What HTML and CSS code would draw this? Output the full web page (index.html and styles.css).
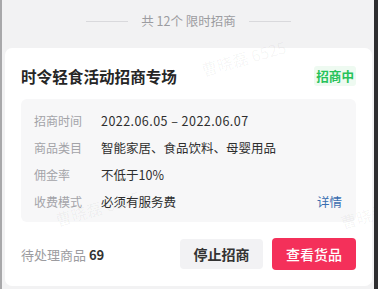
FILE: index.html
```html
<!DOCTYPE html>
<html lang="zh-CN">
<head>
<meta charset="utf-8">
<link rel="stylesheet" href="styles.css">
</head>
<body>
<div class="frame">
  <div class="header">
    <span class="line"></span>
    <span class="header-text">共 12个 限时招商</span>
    <span class="line"></span>
  </div>
  <div class="card">
    <div class="title-row">
      <span class="title">时令轻食活动招商专场</span>
      <span class="badge">招商中</span>
    </div>
    <div class="info">
      <div class="row"><span class="label">招商时间</span><span class="value date">2022.06.05 – 2022.06.07</span></div>
      <div class="row"><span class="label">商品类目</span><span class="value">智能家居、食品饮料、母婴用品</span></div>
      <div class="row"><span class="label">佣金率</span><span class="value">不低于10%</span></div>
      <div class="row"><span class="label">收费模式</span><span class="value">必须有服务费</span><span class="link">详情</span></div>
    </div>
    <div class="footer">
      <span class="pending">待处理商品 <b class="count">69</b></span>
      <div class="actions">
        <button class="btn btn-gray">停止招商</button>
        <button class="btn btn-red">查看货品</button>
      </div>
    </div>
  </div>
  <span class="wm wm1">曹晓磊 6525</span>
  <span class="wm wm2">曹晓磊 6525</span>
  <span class="wm wm3">曹晓磊</span>
</div>
</body>
</html>
```
FILE: styles.css
```css
* { box-sizing: border-box; }
html, body { margin: 0; padding: 0; }
body {
  width: 378px;
  height: 289px;
  overflow: hidden;
  background: #f2f2f3;
  font-family: "Noto Sans CJK SC", "Noto Sans", sans-serif;
  color: #333;
}
.frame {
  position: relative;
  width: 378px;
  height: 289px;
  border-left: 2px solid #a8a8aa;
  border-right: 4px solid #2e2e30;
  padding: 0 2px 0 3px;
  display: flex;
  flex-direction: column;
  overflow: hidden;
}
.header {
  display: flex;
  align-items: center;
  justify-content: center;
  height: 16px;
  margin-top: 13px;
  margin-bottom: 19px;
  gap: 12px;
}
.line {
  width: 42px;
  height: 1px;
  background: #d9d9dc;
}
.header-text {
  font-size: 12.5px;
  line-height: 16px;
  color: #9c9ca0;
  margin: 0 1px;
}
.card {
  background: #fff;
  border-radius: 7px;
  padding: 17px 16px 16px 16px;
}
.title-row {
  display: flex;
  align-items: center;
  justify-content: space-between;
  height: 22px;
}
.title {
  font-size: 15.6px;
  font-weight: 700;
  color: #262626;
  line-height: 22px;
}
.badge {
  font-size: 12.6px;
  font-weight: 700;
  color: #27c25a;
  background: #eefaf1;
  border-radius: 3px;
  padding: 0 2px;
  line-height: 20px;
  height: 20px;
}
.info {
  margin-top: 12px;
  background: #f7f7f8;
  border-radius: 6px;
  padding: 8px 14px 7px 13px;
  display: flex;
  flex-direction: column;
}
.row {
  display: flex;
  align-items: center;
  height: 27px;
}
.label {
  width: 67px;
  font-size: 12px;
  color: #a3a3a8;
}
.value {
  flex: 1;
  font-size: 12.5px;
  color: #2e2e2e;
}
.date {
  letter-spacing: 0.45px;
}
.link {
  font-size: 12.5px;
  color: #3a6eb0;
}
.footer {
  margin-top: 16px;
  height: 32px;
  display: flex;
  align-items: center;
  justify-content: space-between;
}
.pending {
  font-size: 13px;
  color: #9c9ca0;
}
.count {
  font-weight: 700;
  color: #333;
}
.actions {
  display: flex;
  align-items: center;
  gap: 9px;
}
.btn {
  border: none;
  font-family: inherit;
  font-size: 14px;
  font-weight: 700;
  border-radius: 4px;
  padding: 0;
}
.btn-gray {
  width: 83px;
  height: 30px;
  background: #f2f2f4;
  color: #333;
}
.btn-red {
  width: 84px;
  height: 32px;
  background: #f4305a;
  color: #fff;
  font-weight: 500;
}
.wm {
  position: absolute;
  font-size: 16px;
  color: rgba(0, 0, 0, 0.045);
  white-space: nowrap;
  transform: rotate(-16deg);
  pointer-events: none;
}
.wm1 { left: 198px; top: 46px; }
.wm2 { left: 52px; top: 196px; }
.wm3 { left: 338px; top: 204px; }
```
